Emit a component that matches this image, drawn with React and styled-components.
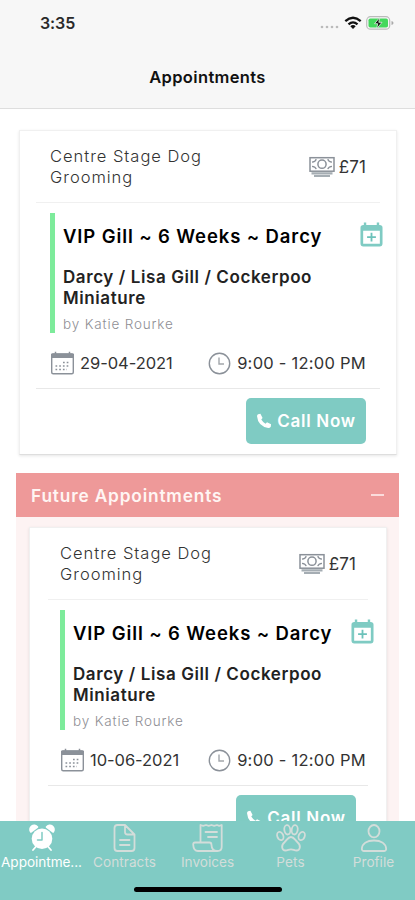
import React from "react";
import styled, { createGlobalStyle, css } from "styled-components";

const GlobalStyle = createGlobalStyle`
  * { box-sizing: border-box; }
  body { margin: 0; background: #fff; }
`;

const Screen = styled.div`
  width: 415px;
  height: 900px;
  display: flex;
  flex-direction: column;
  overflow: hidden;
  background: #fff;
  font-family: Inter, sans-serif;
  color: #333;
`;

const Header = styled.header`
  height: 109px;
  flex: none;
  background: #f7f7f7;
  border-bottom: 1px solid #dedede;
`;

const StatusBar = styled.div`
  height: 46px;
  display: flex;
  align-items: center;
  padding: 0 21px 0 40px;
`;

const Clock = styled.span`
  flex: 1;
  font-size: 16px;
  font-weight: 600;
  letter-spacing: -0.1px;
  color: #2a2a2a;
`;

const StatusIcons = styled.svg`
  width: 76px;
  height: 20px;
`;

const Title = styled.h1`
  margin: 20px 0 0;
  text-align: center;
  font-size: 16.5px;
  line-height: 22px;
  font-weight: 600;
  letter-spacing: 0.35px;
  color: #111;
`;

const Content = styled.main`
  flex: 1;
  min-height: 0;
  overflow: hidden;
  padding: 21px 16px 0;
`;

const Card = styled.article`
  height: 325px;
  background: #fff;
  border: 1px solid #f0f0f0;
  border-bottom-color: #dedede;
  box-shadow: 0 1px 3px rgba(0, 0, 0, 0.1);
  ${(p) =>
    p.$nested
      ? css`
          margin: 10px 12px 0 13px;
          --edge: 18px;
          --inset: 12px;
          --end: 12px;
          --schedule-end: 2px;
          --icon-end: 12px;
        `
      : css`
          margin: 0 2px 0 3px;
          --edge: 16px;
          --inset: 14px;
          --end: 14px;
          --schedule-end: 14px;
          --icon-end: 13px;
        `}
`;

const CardHead = styled.div`
  height: 72px;
  margin: 0 var(--edge);
  padding: 15px var(--end) 0 var(--inset);
  display: flex;
  justify-content: space-between;
  border-bottom: 1px solid #f0f0f0;
`;

const Business = styled.div`
  width: 180px;
  font-size: 16.5px;
  line-height: 21px;
  font-weight: 300;
  letter-spacing: 0.98px;
  color: #333;
`;

const Price = styled.div`
  display: flex;
  align-items: center;
  gap: 4px;
  height: 42px;
  font-size: 17px;
  letter-spacing: 0.1px;
`;

const Service = styled.div`
  height: 120px;
  margin: 10px var(--icon-end) 0 calc(var(--edge) + var(--inset));
  padding-left: 8px;
  border-left: 5px solid #7deb9b;
  display: flex;
  justify-content: space-between;
`;

const ServiceText = styled.div`
  padding-top: 11px;
  white-space: nowrap;
`;

const ServiceName = styled.div`
  font-size: 18.5px;
  line-height: 24px;
  font-weight: 600;
  letter-spacing: 0.88px;
  color: #000;
`;

const Pet = styled.div`
  margin-top: 19px;
  font-size: 17px;
  line-height: 20.5px;
  font-weight: 600;
  letter-spacing: 0.59px;
  color: #222;
`;

const Staff = styled.div`
  margin-top: 7px;
  font-size: 13.5px;
  line-height: 18px;
  font-weight: 300;
  letter-spacing: 0.84px;
  color: #8f8f95;
`;

const AddIcon = styled.svg`
  width: 23px;
  height: 25px;
  margin-top: 9px;
`;

const Schedule = styled.div`
  height: 56px;
  margin: 0 var(--edge);
  padding: 5px 0 0 var(--inset);
  display: flex;
  align-items: center;
  justify-content: space-between;
  border-bottom: 1px solid #e8e8e8;
`;

const When = styled.div`
  display: flex;
  align-items: center;
  gap: ${(p) => p.$gap}px;
  font-size: 16.5px;
  letter-spacing: ${(p) => p.$spacing}px;
  white-space: nowrap;
  color: #333;

  &:last-child {
    margin-right: var(--schedule-end);
  }
`;

const LineIcon = styled.svg`
  flex: none;
  width: ${(p) => p.$w}px;
  height: ${(p) => p.$h}px;
  fill: none;
  stroke: #8b9199;
`;

const CardFoot = styled.div`
  display: flex;
  justify-content: flex-end;
  padding: 9px calc(var(--edge) + var(--end)) 0;
`;

const CallButton = styled.button`
  width: 120px;
  height: 46px;
  border: 0;
  border-radius: 5px;
  padding: 0;
  display: flex;
  align-items: center;
  justify-content: center;
  gap: 5px;
  background: #7fcbc3;
  color: #fff;
  font: 600 17px Inter, sans-serif;
  letter-spacing: 0.72px;
  white-space: nowrap;
`;

const PhoneIcon = styled.svg`
  flex: none;
  width: 16px;
  height: 16px;
`;

const Future = styled.section`
  margin-top: 18px;
  height: 500px;
  background: #fdf3f3;
`;

const FutureHead = styled.div`
  height: 44px;
  padding: 0 15px;
  display: flex;
  align-items: center;
  justify-content: space-between;
  background: #ee9999;
  color: #fff5f3;
  font-size: 17.3px;
  font-weight: 600;
  letter-spacing: 0.83px;
`;

const Minus = styled.span`
  width: 13px;
  height: 2px;
  background: #fbdcdc;
`;

const TabBar = styled.nav`
  height: 79px;
  flex: none;
  background: #80cbc4;
`;

const Tabs = styled.div`
  height: 65px;
  display: grid;
  grid-template-columns: repeat(5, 83px);
`;

const Tab = styled.div`
  display: flex;
  flex-direction: column;
  align-items: center;
  padding-top: 2px;
  font-size: 13.6px;
  line-height: 18px;
  white-space: nowrap;
  letter-spacing: ${(p) => p.$spacing}px;
  color: ${(p) => (p.$active ? "#fff" : "#d3ddda")};
`;

const TabIcon = styled.svg`
  width: 32px;
  height: 30px;
  flex: none;
  fill: none;
  stroke: currentColor;
  stroke-width: 1.8;
  stroke-linecap: round;
  stroke-linejoin: round;
`;

const HomeIndicator = styled.div`
  width: 148px;
  height: 5px;
  margin: 1px auto 0;
  border-radius: 3px;
  background: #000;
`;

const Banknotes = () => (
  <LineIcon $w={26} $h={22} viewBox="0 0 26 22">
    <rect x="1" y="1.7" width="24" height="13.500" strokeWidth="1.5" />
    <path d="M3 6.2Q6.5 6 7.2 3.2M3 10.4Q6.5 10.6 7.2 13.2M23 6.2Q19.500 6 18.800 3.200M23 10.400Q19.500 10.600 18.800 13.200" strokeWidth="1.3" />
    <circle cx="13" cy="8.2" r="4.1" strokeWidth="1.5" />
    <path d="M2.500 17.300H23.500M5 20H21" strokeWidth="2.200" stroke="#a5adb3" />
  </LineIcon>
);

const Calendar = () => (
  <LineIcon $w={25} $h={24} viewBox="0 0 25 24">
    <path d="M1.500 3H23.500V6.500H1.500Z" fill="#8b9199" strokeWidth="1" />
    <rect x="1.700" y="3" width="21.600" height="19.800" rx="1.500" strokeWidth="1.400" />
    <path d="M5.500 0.800V4M19.500 0.800V4" strokeWidth="1.500" />
    <path d="M13 11.500H20M5.500 15H20M5.500 18.500H17" strokeWidth="1.700" strokeDasharray="1.700 2" />
  </LineIcon>
);

const Time = () => (
  <LineIcon $w={23} $h={23} viewBox="0 0 23 23">
    <circle cx="11.500" cy="11.500" r="10.200" strokeWidth="1.400" />
    <path d="M11 5.500V12H16" strokeWidth="1.400" stroke="#a2a6ab" />
  </LineIcon>
);

const AddToCalendar = () => (
  <AddIcon viewBox="0 0 24 26">
    <path
      fill="#7fcbc3"
      fillRule="evenodd"
      d="M4 .5H6.500V3H17.500V.5H20V3H20.500Q23.500 3 23.500 6V22.500Q23.500 25.500 20.500 25.500H3.500Q.5 25.500 .5 22.500V6Q.5 3 3.500 3H4ZM3.300 9V22.700H20.700V9Z"
    />
    <path d="M12 11.200V20.400M7.400 15.800H16.600" stroke="#6cc2ba" strokeWidth="1.900" />
  </AddIcon>
);

function Appointment({ date, nested }) {
  return (
    <Card $nested={nested}>
      <CardHead>
        <Business>Centre Stage Dog<br />Grooming</Business>
        <Price><Banknotes />£71</Price>
      </CardHead>
      <Service>
        <ServiceText>
          <ServiceName>VIP Gill ~ 6 Weeks ~ Darcy</ServiceName>
          <Pet>Darcy / Lisa Gill / Cockerpoo<br />Miniature</Pet>
          <Staff>by Katie Rourke</Staff>
        </ServiceText>
        <AddToCalendar />
      </Service>
      <Schedule>
        <When $gap={5} $spacing={-0.05}><Calendar />{date}</When>
        <When $gap={6} $spacing={0.25}><Time />9:00 - 12:00 PM</When>
      </Schedule>
      <CardFoot>
        <CallButton>
          <PhoneIcon viewBox="0 0 17 17">
            <path d="M2.200 1.200 4.700.900 7 5.300 5.600 7Q7.200 9.800 10.100 11.300L11.700 9.900 16 12 15.700 14.500Q14.800 16 13 15.900 2 14 1.100 3.500 1.100 1.900 2.200 1.200Z" fill="#fff" />
          </PhoneIcon>
          Call Now
        </CallButton>
      </CardFoot>
    </Card>
  );
}

export default function App() {
  return (
    <Screen>
      <GlobalStyle />
      <Header>
        <StatusBar>
          <Clock>3:35</Clock>
          <StatusIcons viewBox="0 0 76 20">
            <g fill="#bbb">
              <circle cx="4" cy="14" r="1.300" /><circle cx="9" cy="14" r="1.300" />
              <circle cx="14" cy="14" r="1.300" /><circle cx="19" cy="14" r="1.300" />
            </g>
            <g fill="none" stroke="#111" strokeWidth="2.300">
              <path d="M27.300 8.200Q35 1.400 42.700 8.200M30.500 11.300Q35 7.400 39.500 11.300" />
            </g>
            <path d="M32.300 13.200Q35 11 37.700 13.200L35 16Z" fill="#111" />
            <rect x="48.700" y="3.700" width="23" height="12.500" rx="3.800" fill="none" stroke="#bbb" strokeWidth="1.200" />
            <rect x="50.500" y="5.500" width="19.500" height="9" rx="1.800" fill="#43d85c" />
            <path d="M73.500 8V12Q75.500 11.500 75.500 10T73.500 8Z" fill="#aaa" />
            <path d="M61.800 4.500 56.500 10.700H59.700L58.700 15.700 64 9.300H60.800Z" fill="#111" stroke="#dff7e2" strokeWidth=".8" />
          </StatusIcons>
        </StatusBar>
        <Title>Appointments</Title>
      </Header>
      <Content>
        <Appointment date="29-04-2021" />
        <Future>
          <FutureHead>Future Appointments<Minus /></FutureHead>
          <Appointment date="10-06-2021" nested />
        </Future>
      </Content>
      <TabBar>
        <Tabs>
          <Tab $active $spacing={-0.05}>
            <TabIcon viewBox="0 0 32 30">
              <circle cx="16" cy="15.700" r="10.300" fill="currentColor" stroke="none" />
              <path d="M4.800 9A4 4 0 0 1 11.500 4ZM27.200 9A4 4 0 0 0 20.500 4Z" fill="currentColor" strokeWidth="1.600" />
              <path d="M7 27 10.500 23M25 27 21.500 23" />
              <path d="M16 9.500V17H11.500" stroke="#80cbc4" strokeWidth="1.500" />
            </TabIcon>
            Appointme...
          </Tab>
          <Tab $spacing={0.05}>
            <TabIcon viewBox="0 0 32 30">
              <path d="M8.500 2H16L25.500 11.500V25Q25.500 28 22.500 28H8.500Q5.500 28 5.500 25V5Q5.500 2 8.500 2ZM16 2V9Q16 11.500 18.500 11.500H25.500M11 17H20.500M11 22H20.500" />
            </TabIcon>
            Contracts
          </Tab>
          <Tab $spacing={0}>
            <TabIcon viewBox="0 0 32 30">
              <path d="M8.500 19.500V2L11.200 2.800 14 2 16.700 2.800 19.500 2 22.200 2.800 25 2 27.200 2.800 29.700 2V24Q29.700 28 25.500 28H6Q1.500 28 1.200 21.500 1.200 19.500 3 19.500H17.500Q19.500 19.500 19.500 22 19.700 28 25 28M13.500 9H25M16 14H25" />
            </TabIcon>
            Invoices
          </Tab>
          <Tab $spacing={0.1}>
            <TabIcon viewBox="0 0 32 30">
              <ellipse cx="12.300" cy="6.800" rx="3" ry="4.700" transform="rotate(-8 12.300 6.800)" />
              <ellipse cx="19.700" cy="6.800" rx="3" ry="4.700" transform="rotate(8 19.700 6.800)" />
              <ellipse cx="5.300" cy="13" rx="3" ry="4.300" transform="rotate(-22 5.300 13)" />
              <ellipse cx="26.700" cy="13" rx="3" ry="4.300" transform="rotate(22 26.700 13)" />
              <path d="M16 14C13 14 12 17 9.500 19.200 5.500 22.500 7 27.500 10.500 27.500 13 27.500 13.500 26.300 16 26.300S19 27.500 21.500 27.500C25 27.500 26.500 22.500 22.500 19.200 20 17 19 14 16 14Z" />
            </TabIcon>
            Pets
          </Tab>
          <Tab $spacing={0}>
            <TabIcon viewBox="0 0 32 30">
              <ellipse cx="16" cy="8.200" rx="5.500" ry="6.200" />
              <path d="M3.800 26C4 20.500 9 17.500 16 17.500S28 20.500 28.200 26Q28 28 26 28H6Q4 28 3.800 26Z" />
            </TabIcon>
            Profile
          </Tab>
        </Tabs>
        <HomeIndicator />
      </TabBar>
    </Screen>
  );
}
